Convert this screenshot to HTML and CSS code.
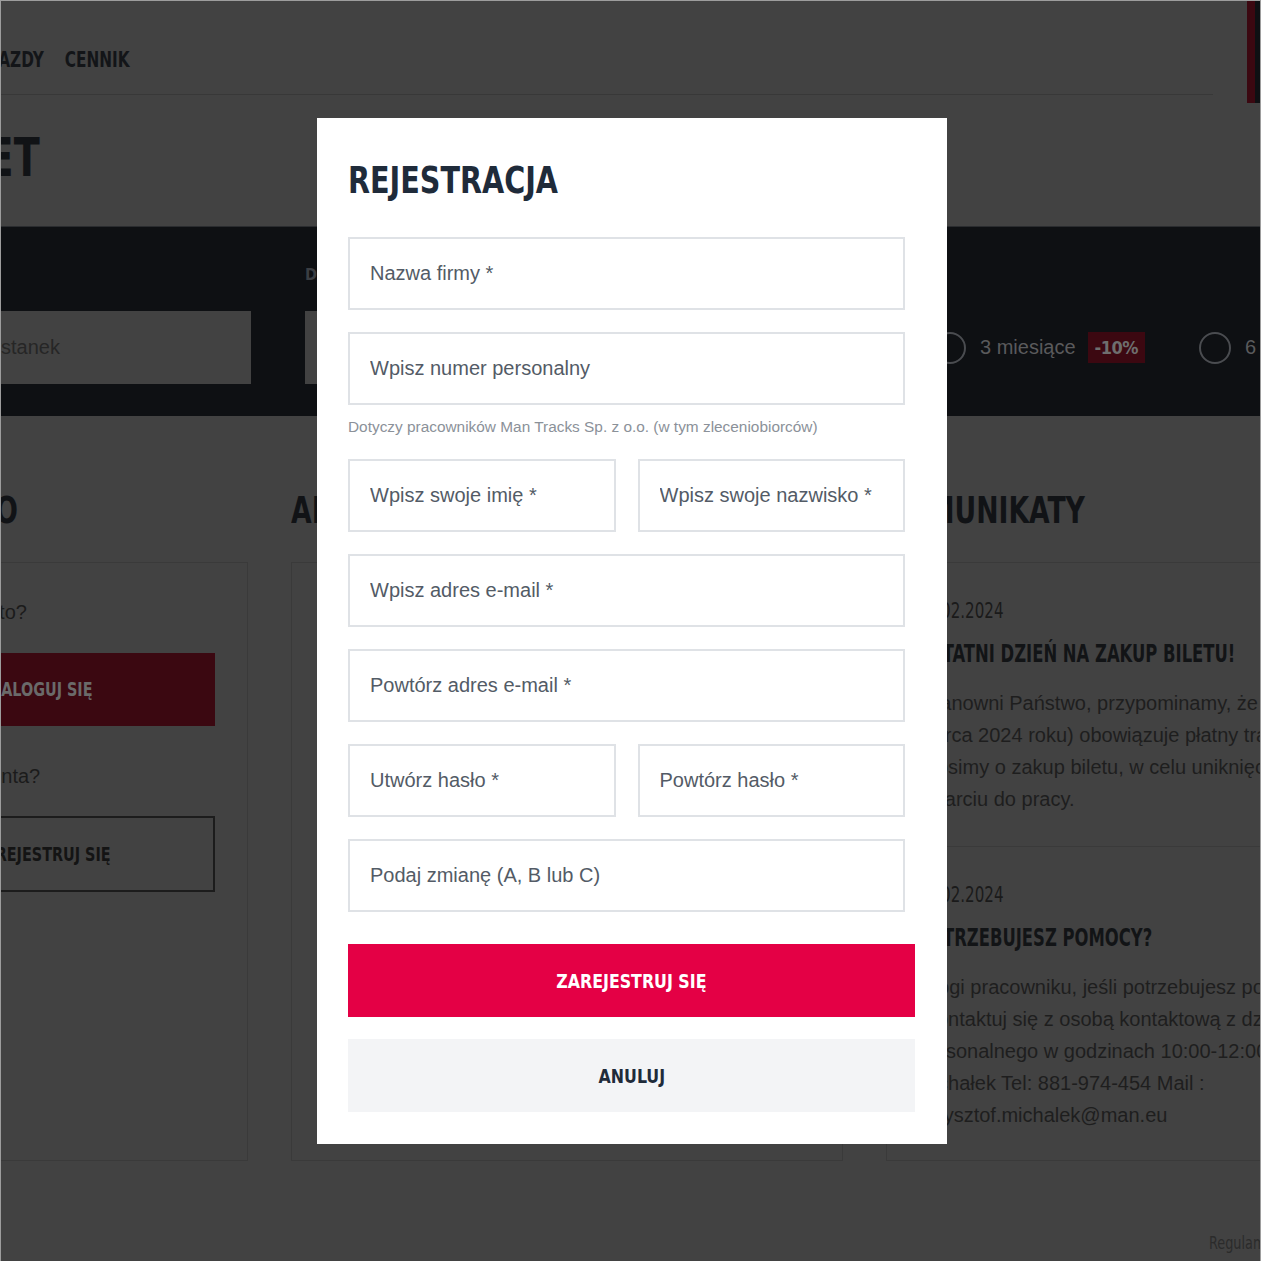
FILE: index.html
```html
<!DOCTYPE html>
<html lang="pl">
<head>
  <meta charset="UTF-8">
  <meta name="viewport" content="width=device-width, initial-scale=1.0">
  <title>Rejestracja</title>
  <link rel="stylesheet" href="styles.css">
</head>
<body>
  <div class="page">
    <header class="top">
      <div class="top-bar">
        <ul class="menu">
          <li>PRZEJAZDY</li>
          <li>CENNIK</li>
        </ul>
      </div>
      <div class="account-btn"></div>
    </header>

    <h1 class="page-title">KUP BILET</h1>

    <!-- ticket search -->
    <section class="search">
      <div class="field field-stop">
        <label>PRZYSTANEK</label>
        <div class="fake-input">Wybierz swój przystanek</div>
      </div>
      <div class="field field-date">
        <label>DATA ROZPOCZĘCIA</label>
        <div class="fake-input"></div>
      </div>
      <div class="periods">
        <div class="period"><span class="radio"></span>3 miesiące<span class="discount">-10%</span></div>
        <div class="period"><span class="radio"></span>6 miesięcy</div>
      </div>
    </section>

    <div class="columns">
      <div class="col">
        <h2 class="col-title">MOJE KONTO</h2>
        <div class="card account">
          <p>Posiadasz konto?</p>
          <a class="bg-btn bg-btn-red"><span>ZALOGUJ SIĘ</span></a>
          <p>Nie masz tu konta?</p>
          <a class="bg-btn bg-btn-line"><span>ZAREJESTRUJ SIĘ</span></a>
        </div>
      </div>
      <div class="col">
        <h2 class="col-title">AKTUALNOŚCI</h2>
        <div class="card"></div>
      </div>
      <div class="col">
        <h2 class="col-title">KOMUNIKATY</h2>
        <div class="card news">
          <article class="news-item">
            <div class="news-date">29.02.2024</div>
            <h3>OSTATNI DZIEŃ NA ZAKUP BILETU!</h3>
            <p>Szanowni Państwo, przypominamy, że od jutra (1<br>marca 2024 roku) obowiązuje płatny transport.<br>Prosimy o zakup biletu, w celu uniknięcia problemów przy<br>dotarciu do pracy.</p>
          </article>
          <article class="news-item">
            <div class="news-date">15.02.2024</div>
            <h3>POTRZEBUJESZ POMOCY?</h3>
            <p>Drogi pracowniku, jeśli potrzebujesz pomocy<br>skontaktuj się z osobą kontaktową z działu<br>personalnego w godzinach 10:00-12:00 Krzysztof<br>Michałek Tel: 881-974-454 Mail :<br>krzysztof.michalek@man.eu</p>
          </article>
        </div>
      </div>
    </div>

    <footer class="foot">
      <a>Regulamin</a>
    </footer>
  </div>

  <!-- registration modal -->
  <div class="overlay">
    <div class="modal">
      <h2>REJESTRACJA</h2>
      <form class="reg-form">
        <input type="text" placeholder="Nazwa firmy *">
        <input type="text" placeholder="Wpisz numer personalny">
        <p class="hint">Dotyczy pracowników Man Tracks Sp. z o.o. (w tym zleceniobiorców)</p>
        <div class="row">
          <input type="text" placeholder="Wpisz swoje imię *">
          <input type="text" placeholder="Wpisz swoje nazwisko *">
        </div>
        <input type="email" placeholder="Wpisz adres e-mail *">
        <input type="email" placeholder="Powtórz adres e-mail *">
        <div class="row">
          <input type="password" placeholder="Utwórz hasło *">
          <input type="password" placeholder="Powtórz hasło *">
        </div>
        <input type="text" placeholder="Podaj zmianę (A, B lub C)">
        <button type="button" class="btn-main"><span>ZAREJESTRUJ SIĘ</span></button>
        <button type="button" class="btn-cancel"><span>ANULUJ</span></button>
      </form>
    </div>
  </div>
</body>
</html>
```

FILE: styles.css
```css
* {
  box-sizing: border-box;
}

html, body {
  margin: 0;
  height: 100%;
  overflow: hidden;
}

body {
  background: #424242;
  font-family: "Liberation Sans", Arial, sans-serif;
  color: #1b1b1b;
  border: 1px solid #9d9d9d;
  border-bottom: 0;
}

/* page behind the modal (already dimmed colours) */
.page {
  margin-left: -175px;
  width: 1440px;
}

.top {
  display: flex;
  align-items: flex-start;
}

.top-bar {
  width: 1387px;
  height: 94px;
  border-bottom: 1px solid #383838;
}

.menu {
  display: flex;
  gap: 26px;
  margin: 0 0 0 122px;
  padding: 47px 0 0;
  list-style: none;
  font-family: "DejaVu Sans Condensed", sans-serif;
  font-weight: 700;
  font-size: 21px;
  line-height: 24px;
  color: #131518;
  transform: scaleX(.81);
  transform-origin: 0 50%;
}

.account-btn {
  margin-left: 34px;
  width: 14px;
  height: 102px;
  background: #3b0811;
  border-right: 6px solid #0e1013;
}

.page-title {
  margin: 28px 0 0 -7px;
  font-family: "DejaVu Sans Condensed", sans-serif;
  font-size: 53px;
  line-height: 1;
  color: #111316;
  white-space: nowrap;
  transform: scaleX(.8);
  transform-origin: 0 50%;
}

.search {
  display: flex;
  align-items: flex-end;
  gap: 54px;
  margin-top: 42px;
  height: 190px;
  padding: 0 0 32px;
  background: #0e1013;
  border-top: 1px solid #2a2c2f;
}

.field {
  flex: none;
}

.field label {
  display: block;
  margin-bottom: 26px;
  font-family: "DejaVu Sans Condensed", sans-serif;
  font-weight: 700;
  font-size: 16px;
  line-height: 20px;
  color: #3b3e43;
}

.field-stop {
  width: 425px;
}

.field-date {
  width: 560px;
}

.fake-input {
  height: 73px;
  padding: 0 14px;
  background: #424242;
  font-size: 20px;
  line-height: 73px;
  color: #262626;
  white-space: nowrap;
}

.periods {
  flex: none;
  display: flex;
  align-items: center;
  gap: 54px;
  height: 73px;
  margin-left: 15px;
}

.period {
  display: flex;
  align-items: center;
  font-size: 20px;
  color: #5a5a5c;
  white-space: nowrap;
}

.radio {
  width: 32px;
  height: 32px;
  margin-right: 14px;
  border: 2px solid #4a4c50;
  border-radius: 50%;
}

.discount {
  margin-left: 12px;
  padding: 0 7px;
  height: 31px;
  line-height: 31px;
  background: #3c0811;
  color: #6e6e6e;
  font-family: "DejaVu Sans Condensed", sans-serif;
  font-weight: 700;
  font-size: 18px;
  letter-spacing: -0.5px;
}

.columns {
  display: grid;
  grid-template-columns: 422px 552px 552px;
  gap: 43px;
  margin-top: 75px;
}

.col-title {
  margin: 0 0 33px;
  font-family: "DejaVu Sans Condensed", sans-serif;
  font-size: 38px;
  line-height: 1;
  color: #111316;
  white-space: nowrap;
  transform: scaleX(.78);
  transform-origin: 0 50%;
}

.card {
  height: 599px;
  border: 1px solid #3a3a3a;
}

.account {
  padding: 37px 32px 0 42px;
}

.account p {
  margin: 0;
  font-size: 20px;
  line-height: 24px;
  color: #1b1b1b;
}

.bg-btn {
  display: block;
  height: 73px;
  margin: 29px 0 38px;
  font-family: "DejaVu Sans Condensed", sans-serif;
  font-weight: 700;
  font-size: 20px;
  line-height: 73px;
  text-align: center;
  white-space: nowrap;
}

.bg-btn span {
  display: inline-block;
  transform: scaleX(.8);
}

.bg-btn-red {
  background: #3b0811;
  color: #6a6a6a;
}

.bg-btn-line {
  height: 76px;
  margin: 28px 0 0;
  line-height: 72px;
  border: 2px solid #1c1c1c;
  color: #141414;
}

.news-item {
  padding: 36px 0 31px 30px;
  border-bottom: 1px solid #3a3a3a;
  white-space: nowrap;
}

.news-item:last-child {
  border-bottom: 0;
}

.news-date {
  font-family: "DejaVu Sans Condensed", sans-serif;
  font-size: 21px;
  line-height: 24px;
  color: #1a1a1a;
  transform: scaleX(.8);
  transform-origin: 0 50%;
}

.news-item h3 {
  margin: 17px 0 19px;
  font-family: "DejaVu Sans Condensed", sans-serif;
  font-size: 24px;
  line-height: 28px;
  color: #121416;
  transform: scaleX(.76);
  transform-origin: 0 50%;
}

.news-item p {
  margin: 0;
  font-size: 20px;
  line-height: 32px;
  color: #1e1e1e;
}

.foot {
  padding: 70px 0 0 1383px;
  font-family: "DejaVu Sans Condensed", sans-serif;
  font-size: 17px;
  line-height: 24px;
  color: #2b2b2b;
}

.foot a {
  display: inline-block;
  transform: scaleX(.84);
  transform-origin: 0 50%;
}

/* modal */
.overlay {
  position: fixed;
  inset: 0;
  display: flex;
  justify-content: center;
  align-items: flex-start;
  padding: 118px 0 0 3px;
}

.modal {
  width: 630px;
  background: #fff;
  padding: 44px 32px 32px 31px;
}

.modal h2 {
  margin: 0 0 38px;
  font-family: "DejaVu Sans Condensed", sans-serif;
  font-weight: 700;
  font-size: 37px;
  line-height: 1;
  color: #1f2b3a;
  white-space: nowrap;
  transform: scaleX(.86);
  transform-origin: 0 50%;
}

.reg-form input {
  display: block;
  width: calc(100% - 10px);
  height: 73px;
  margin: 0 0 22px;
  padding: 0 20px;
  border: 2px solid #dfe2e6;
  border-radius: 0;
  font-family: "Liberation Sans", Arial, sans-serif;
  font-size: 20px;
  color: #333;
  outline: none;
}

.reg-form input::placeholder {
  color: #535b66;
  opacity: 1;
}

.hint {
  margin: -10px 0 22px;
  font-size: 15.4px;
  line-height: 20px;
  color: #8b9199;
}

.row {
  display: grid;
  grid-template-columns: 1fr 1fr;
  gap: 22px;
  width: calc(100% - 10px);
}

.row input {
  width: 100%;
}

.btn-main, .btn-cancel {
  display: block;
  width: 100%;
  height: 73px;
  border: 0;
  font-family: "DejaVu Sans Condensed", sans-serif;
  font-weight: 700;
  font-size: 20px;
  cursor: pointer;
}

.btn-main span, .btn-cancel span {
  display: inline-block;
  transform: scaleX(.88);
}

.btn-main {
  margin-top: 32px;
  background: #e40045;
  color: #fff;
}

.btn-cancel {
  margin-top: 22px;
  background: #f3f4f6;
  color: #1f2b3a;
}
```
